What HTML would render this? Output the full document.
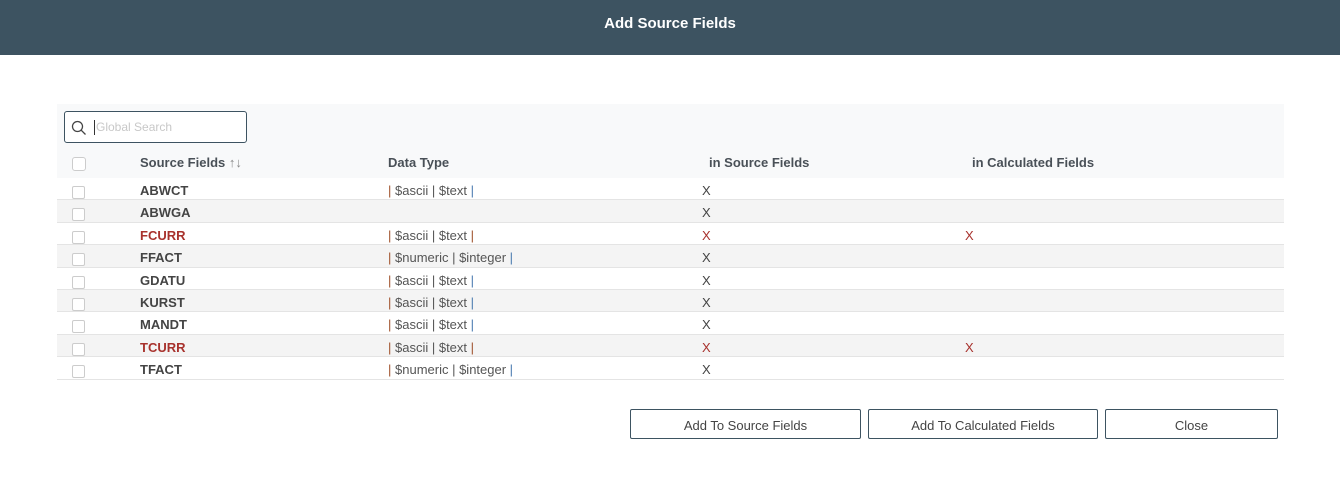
<!DOCTYPE html>
<html><head><style>
*{box-sizing:border-box;margin:0;padding:0}
body{width:1340px;height:488px;background:#fff;font-family:"Liberation Sans",sans-serif;color:#495057;position:relative;overflow:hidden}
.hdr{position:absolute;left:0;top:0;width:1340px;height:55px;background:#3d5361;color:#fff;font-weight:bold;font-size:15px;text-align:center;line-height:48px}
.tb{position:absolute;left:57px;top:104px;width:1227px;height:74px;background:#f8f9fa}
.search{position:absolute;left:64px;top:111px;width:183px;height:32px;border:1px solid #3d5361;border-radius:3px;background:#fff}
.search span{position:absolute;left:29px;top:8px;font-size:12px;color:#c8c8c8;border-left:1px solid #333;padding-left:1px;line-height:15px}
.th{position:absolute;top:155px;font-size:13px;font-weight:bold;color:#495057}
.cb{position:absolute;left:72px;width:13px;height:13px;border:1px solid #ccc;border-radius:2px;background:#fff}
.row{position:absolute;left:57px;width:1227px;height:22.4px;border-bottom:1px solid #e4e4e4;font-size:13px;line-height:25px}
.row.g{background:#f4f4f4}
.row .n{position:absolute;left:83px;font-weight:bold;color:#444}
.row .n.r{color:#a8322d}
.row .d{position:absolute;left:331px;color:#555}
.row .x1{position:absolute;left:645px;color:#444}
.row .x2{position:absolute;left:908px;color:#a8322d}
.p1{color:#a0522d}.p3{color:#4a7bb0}
.btn{position:absolute;top:409px;height:30px;border:1px solid #3d5361;border-radius:2px;background:#fff;font-size:13px;color:#444;text-align:center;line-height:31px}
</style></head><body>
<div class="hdr">Add Source Fields</div>
<div class="tb"></div>
<div class="search"><svg style="position:absolute;left:6px;top:8px" width="16" height="16" viewBox="0 0 16 16"><circle cx="6.5" cy="6.5" r="5" fill="none" stroke="#444" stroke-width="1.3"/><line x1="10.2" y1="10.2" x2="14.5" y2="14.5" stroke="#444" stroke-width="1.3"/></svg><span>Global Search</span></div>
<div class="cb" style="top:157px;border-radius:3px;width:14px;height:14px"></div>
<div class="th" style="left:140px">Source Fields <span style="color:#888;font-weight:normal">↑↓</span></div>
<div class="th" style="left:388px">Data Type</div>
<div class="th" style="left:709px">in Source Fields</div>
<div class="th" style="left:972px">in Calculated Fields</div>

<div class="row" style="top:178px"><span class="n">ABWCT</span><span class="d"><span class="p1">|</span> $ascii | $text <span class="p3">|</span></span><span class="x1">X</span></div>
<div class="row g" style="top:200.4px"><span class="n">ABWGA</span><span class="x1">X</span></div>
<div class="row" style="top:222.8px"><span class="n r">FCURR</span><span class="d"><span class="p1">|</span> $ascii | $text <span class="p1">|</span></span><span class="x1" style="color:#a8322d">X</span><span class="x2">X</span></div>
<div class="row g" style="top:245.2px"><span class="n">FFACT</span><span class="d"><span class="p1">|</span> $numeric | $integer <span class="p3">|</span></span><span class="x1">X</span></div>
<div class="row" style="top:267.6px"><span class="n">GDATU</span><span class="d"><span class="p1">|</span> $ascii | $text <span class="p3">|</span></span><span class="x1">X</span></div>
<div class="row g" style="top:290px"><span class="n">KURST</span><span class="d"><span class="p1">|</span> $ascii | $text <span class="p3">|</span></span><span class="x1">X</span></div>
<div class="row" style="top:312.4px"><span class="n">MANDT</span><span class="d"><span class="p1">|</span> $ascii | $text <span class="p3">|</span></span><span class="x1">X</span></div>
<div class="row g" style="top:334.8px"><span class="n r">TCURR</span><span class="d"><span class="p1">|</span> $ascii | $text <span class="p1">|</span></span><span class="x1" style="color:#a8322d">X</span><span class="x2">X</span></div>
<div class="row" style="top:357.2px"><span class="n">TFACT</span><span class="d"><span class="p1">|</span> $numeric | $integer <span class="p3">|</span></span><span class="x1">X</span></div>

<div class="cb" style="top:186px"></div><div class="cb" style="top:208px"></div><div class="cb" style="top:231px"></div><div class="cb" style="top:253px"></div><div class="cb" style="top:276px"></div><div class="cb" style="top:298px"></div><div class="cb" style="top:320px"></div><div class="cb" style="top:343px"></div><div class="cb" style="top:365px"></div>

<div class="btn" style="left:630px;width:231px">Add To Source Fields</div>
<div class="btn" style="left:868px;width:230px">Add To Calculated Fields</div>
<div class="btn" style="left:1105px;width:173px">Close</div>
</body></html>
